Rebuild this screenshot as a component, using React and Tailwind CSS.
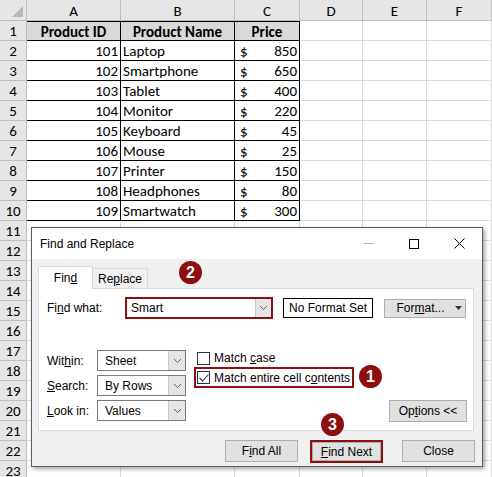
import React from 'react';

const cols = ['A', 'B', 'C', 'D', 'E', 'F'];
const colW = ['w-[94px]', 'w-[114px]', 'w-[65px]', 'w-[63px]', 'w-[64px]', 'w-[65px]'];

const products = [
  [101, 'Laptop', 850],
  [102, 'Smartphone', 650],
  [103, 'Tablet', 400],
  [104, 'Monitor', 220],
  [105, 'Keyboard', 45],
  [106, 'Mouse', 25],
  [107, 'Printer', 150],
  [108, 'Headphones', 80],
  [109, 'Smartwatch', 300],
];

const cellFont = { fontFamily: 'Carlito, Lato, "Liberation Sans", sans-serif' };
const uiFont = { fontFamily: '"Segoe UI", "Liberation Sans", Arial, sans-serif' };

function Chevron() {
  return (
    <svg width="9" height="6" viewBox="0 0 9 6" fill="none">
      <path d="M1 1l3.5 3.5L8 1" stroke="#606060" strokeWidth="1" />
    </svg>
  );
}

function Badge({ n, className }) {
  return (
    <div
      className={`absolute flex h-[23px] w-[23px] items-center justify-center rounded-full bg-[#8e0f0f] text-[16px] font-bold text-white ${className}`}
      style={uiFont}
    >
      {n}
    </div>
  );
}

function Select({ value }) {
  return (
    <div className="flex h-[21px] w-[89px] items-center border border-[#7a7a7a] bg-white">
      <span className="flex-1 pl-[7px] text-[12px] text-black">{value}</span>
      <span className="flex h-full w-[17px] items-center justify-center border-l border-[#c9c9c9] bg-[#e5e5e5]">
        <Chevron />
      </span>
    </div>
  );
}

function Btn({ children, className = '' }) {
  return (
    <div
      className={`flex items-center justify-center border border-[#adadad] bg-[#e1e1e1] text-[12px] text-black ${className}`}
    >
      {children}
    </div>
  );
}

function Sheet() {
  const rows = [];
  for (let r = 1; r <= 23; r++) rows.push(r);
  return (
    <div className="flex flex-col" style={cellFont}>
      <div className="flex h-[21px]">
        <div className="relative w-[27px] border-r border-b border-[#bdbdbd] bg-[#e6e6e6]">
          <svg className="absolute right-[3px] bottom-[3px]" width="11" height="11" viewBox="0 0 11 11">
            <path d="M11 0L11 11L0 11Z" fill="#b7b7b7" />
          </svg>
        </div>
        {cols.map((c, i) => (
          <div
            key={c}
            className={`${colW[i]} flex items-center justify-center border-r border-b border-[#bdbdbd] bg-[#e6e6e6] pt-[2px] text-[15px] text-black`}
          >
            {c}
          </div>
        ))}
      </div>
      {rows.map((r) => {
        const p = r >= 2 && r <= 10 ? products[r - 2] : null;
        return (
          <div key={r} className="flex h-[20px]">
            <div className="flex w-[27px] items-center justify-center border-r border-b border-[#bdbdbd] bg-[#e6e6e6] pt-[2px] text-[15px] text-black">
              {r}
            </div>
            {r === 1 ? (
              <>
                <div className="flex w-[94px] items-center justify-center border border-black border-l-0 bg-[#d9d9d9] pt-[2px] text-[15px] font-bold">
                  Product ID
                </div>
                <div className="flex w-[114px] items-center justify-center border-y border-r border-black bg-[#d9d9d9] pt-[2px] text-[15px] font-bold">
                  Product Name
                </div>
                <div className="flex w-[65px] items-center justify-center border-y border-r border-black bg-[#d9d9d9] pt-[2px] text-[15px] font-bold">
                  Price
                </div>
              </>
            ) : p ? (
              <>
                <div className="flex w-[94px] items-center justify-end border-r border-b border-black pt-[2px] pr-[2px] text-[15px]">
                  {p[0]}
                </div>
                <div className="flex w-[114px] items-center border-r border-b border-black pt-[2px] pl-[2px] text-[15px]">
                  {p[1]}
                </div>
                <div className="flex w-[65px] items-center justify-between border-r border-b border-black pt-[2px] pr-[2px] pl-[5px] text-[15px]">
                  <span>$</span>
                  <span>{p[2]}</span>
                </div>
              </>
            ) : (
              <>
                <div className="w-[94px] border-r border-b border-[#d9d9d9]" />
                <div className="w-[114px] border-r border-b border-[#d9d9d9]" />
                <div className="w-[65px] border-r border-b border-[#d9d9d9]" />
              </>
            )}
            <div className="w-[63px] border-r border-b border-[#d9d9d9]" />
            <div className="w-[64px] border-r border-b border-[#d9d9d9]" />
            <div className="w-[65px] border-r border-b border-[#d9d9d9]" />
          </div>
        );
      })}
    </div>
  );
}

function Dialog() {
  return (
    <div
      className="absolute top-[227px] left-[31px] flex h-[240px] w-[452px] flex-col border border-[#5c5c5c] bg-[#f0f0f0] text-black shadow-[2px_2px_4px_rgba(0,0,0,0.35)]"
      style={uiFont}
    >
      <div className="flex h-[31px] items-center bg-white pl-[8px]">
        <span className="flex-1 text-[12px]">Find and Replace</span>
        <div className="flex items-center">
          <div className="flex w-[46px] justify-center">
            <div className="h-px w-[10px] bg-[#b5b5b5]" />
          </div>
          <div className="flex w-[44px] justify-center">
            <div className="h-[10px] w-[10px] border border-black" />
          </div>
          <div className="flex w-[46px] justify-center">
            <svg width="11" height="11" viewBox="0 0 11 11">
              <path d="M0.5 0.5L10.5 10.5M10.5 0.5L0.5 10.5" stroke="#000" strokeWidth="1" />
            </svg>
          </div>
        </div>
      </div>
      <div className="flex flex-col px-[6px] pt-[7px]">
        <div className="flex items-end">
          <div className="relative z-10 mb-[-1px] flex h-[23px] w-[55px] items-center justify-center border border-b-0 border-[#d9d9d9] bg-white text-[12px]">
            Fin<u>d</u>
          </div>
          <div className="flex h-[20px] w-[55px] items-center justify-center border border-b-0 border-l-0 border-[#d9d9d9] bg-[#f0f0f0] text-[12px]">
            Re<u>p</u>lace
          </div>
        </div>
        <div className="flex h-[143px] w-[436px] flex-col border border-[#d9d9d9] bg-white pt-[8px] pl-[8px]">
          <div className="flex items-center">
            <span className="w-[78px] text-[12px]">
              Fi<u>n</u>d what:
            </span>
            <div className="flex h-[22px] w-[148px] items-center border-2 border-[#8e0f0f] bg-white">
              <span className="flex-1 pl-[4px] text-[12px]">Smart</span>
              <span className="flex h-full w-[16px] items-center justify-center border-l border-[#c9c9c9] bg-[#e5e5e5]">
                <Chevron />
              </span>
            </div>
            <div className="ml-[10px] flex h-[20px] w-[90px] items-center justify-center border border-black text-[12px]">
              No Format Set
            </div>
            <Btn className="ml-[11px] h-[19px] w-[82px] gap-[10px] pl-[8px]">
              <span>
                For<u>m</u>at...
              </span>
              <svg width="7" height="4" viewBox="0 0 7 4">
                <path d="M0 0h7L3.5 4z" fill="#333" />
              </svg>
            </Btn>
          </div>
          <div className="mt-[31px] flex">
            <div className="flex flex-col gap-[4px]">
              <div className="flex items-center">
                <span className="w-[50px] text-[12px]">
                  Wit<u>h</u>in:
                </span>
                <Select value="Sheet" />
              </div>
              <div className="flex items-center">
                <span className="w-[50px] text-[12px]">
                  <u>S</u>earch:
                </span>
                <Select value="By Rows" />
              </div>
              <div className="flex items-center">
                <span className="w-[50px] text-[12px]">
                  <u>L</u>ook in:
                </span>
                <Select value="Values" />
              </div>
            </div>
            <div className="ml-[8px] flex flex-col">
              <div className="flex h-[16px] items-center pl-[3px]">
                <div className="h-[13px] w-[13px] border border-[#333]" />
                <span className="ml-[4px] text-[12px]">
                  Match <u>c</u>ase
                </span>
              </div>
              <div className="mt-[1px] flex h-[21px] w-[160px] items-center border-2 border-[#8e0f0f] pl-[1px]">
                <div className="flex h-[13px] w-[13px] items-center justify-center border border-[#333]">
                  <svg width="10" height="8" viewBox="0 0 10 8">
                    <path d="M0.5 4l3 3L9.5 0.5" stroke="#333" strokeWidth="1.1" fill="none" />
                  </svg>
                </div>
                <span className="ml-[4px] text-[12px]">
                  Match entire cell c<u>o</u>ntents
                </span>
              </div>
            </div>
            <div className="flex flex-1 items-end justify-end pr-[6px]">
              <Btn className="mb-[-1px] h-[22px] w-[78px]">
                <span>
                  Op<u>t</u>ions &lt;&lt;
                </span>
              </Btn>
            </div>
          </div>
        </div>
        <div className="mt-[9px] flex justify-end gap-[12px] pr-[1px]">
          <Btn className="h-[22px] w-[73px]">
            <span>
              F<u>i</u>nd All
            </span>
          </Btn>
          <div className="border-2 border-[#8e0f0f]">
            <Btn className="h-[19px] w-[69px]">
              <span>
                <u>F</u>ind Next
              </span>
            </Btn>
          </div>
          <Btn className="ml-[7px] h-[22px] w-[73px]">
            <span>Close</span>
          </Btn>
        </div>
      </div>
    </div>
  );
}

export default function App() {
  return (
    <div className="relative h-[477px] w-[492px] overflow-hidden bg-white">
      <Sheet />
      <Dialog />
      <Badge n="2" className="top-[261px] left-[179px]" />
      <Badge n="1" className="top-[365px] left-[359px]" />
      <Badge n="3" className="top-[413px] left-[321px]" />
    </div>
  );
}
